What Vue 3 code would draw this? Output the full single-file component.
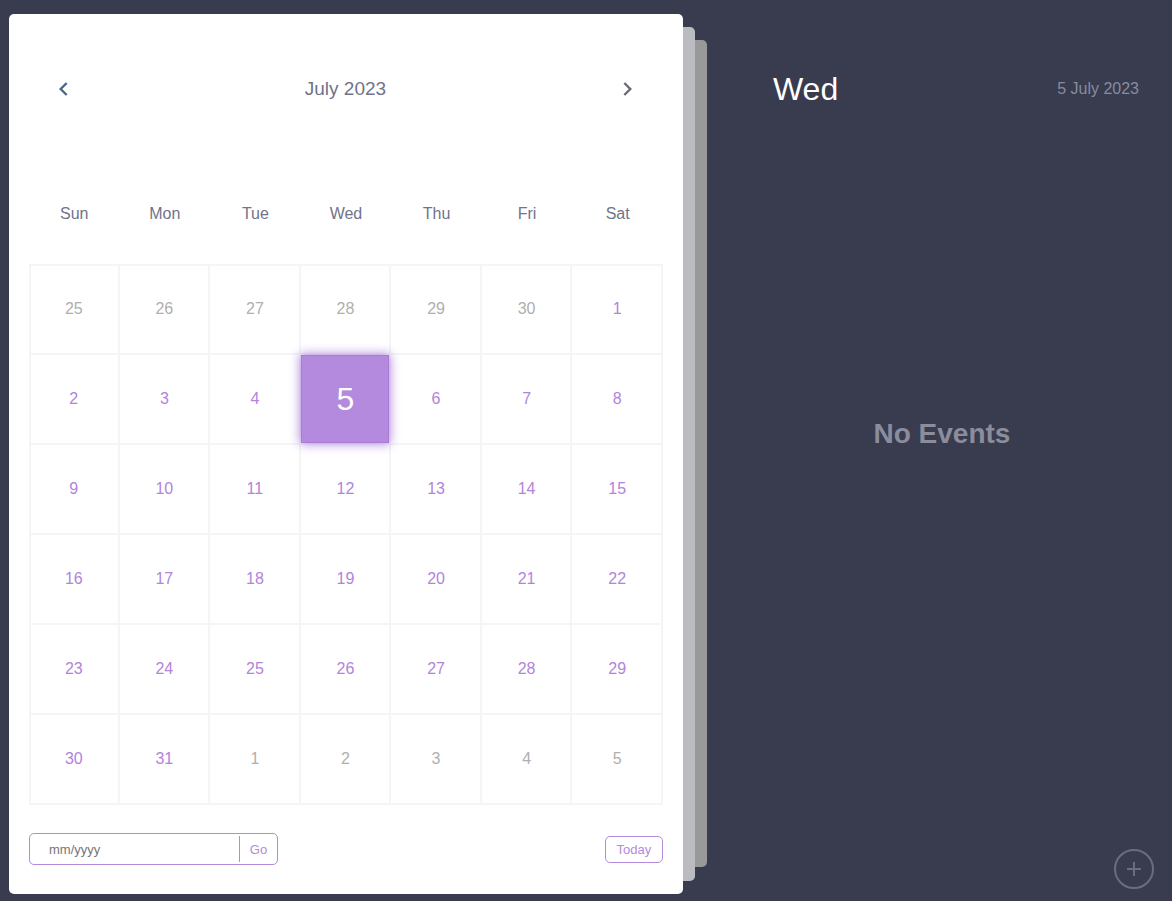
<script setup>
import { ref } from 'vue'

const weekdays = ['Sun', 'Mon', 'Tue', 'Wed', 'Thu', 'Fri', 'Sat']
const selected = ref('5-current')
const monthInput = ref('')

const range = (from, to, month) =>
  Array.from({ length: to - from + 1 }, (_, i) => ({
    day: from + i,
    month,
    key: `${from + i}-${month}`,
  }))

const days = [
  ...range(25, 30, 'previous'),
  ...range(1, 31, 'current'),
  ...range(1, 5, 'next'),
]
</script>

<template>
  <main class="page">
    <section class="calendar" aria-label="Calendar">
      <header class="month">
        <button class="arrow prev" type="button" aria-label="Previous month">
          <svg width="9" height="16" viewBox="0 0 9 16"><path d="M7.7 2l-6 6 6 6" /></svg>
        </button>
        <h1>July 2023</h1>
        <button class="arrow" type="button" aria-label="Next month">
          <svg width="9" height="16" viewBox="0 0 9 16"><path d="M1.3 2l6 6-6 6" /></svg>
        </button>
      </header>

      <div class="weekdays">
        <span v-for="name in weekdays" :key="name">{{ name }}</span>
      </div>

      <div class="days">
        <div v-for="d in days" :key="d.key" class="cell">
          <button
            type="button"
            class="day"
            :class="{ muted: d.month !== 'current', active: d.key === selected }"
            @click="selected = d.key"
          >{{ d.day }}</button>
        </div>
      </div>

      <footer class="tools">
        <form class="goto" @submit.prevent>
          <input v-model="monthInput" type="text" placeholder="mm/yyyy" aria-label="Month and year" />
          <button type="submit">Go</button>
        </form>
        <button class="today" type="button">Today</button>
      </footer>
    </section>

    <div class="sheet near"></div>
    <div class="sheet far"></div>

    <section class="events" aria-label="Events">
      <header class="date">
        <h2>Wed</h2>
        <p>5 July 2023</p>
      </header>
      <h3>No Events</h3>
      <button class="add" type="button" aria-label="Add event">
        <svg width="14" height="14" viewBox="0 0 14 14"><path d="M7 0v14M0 7h14" /></svg>
      </button>
    </section>
  </main>
</template>

<style>
body {
  background: #383c4e;
}
</style>

<style scoped>
* {
  box-sizing: border-box;
  margin: 0;
}

.page {
  display: flex;
  min-height: 100vh;
  padding: 14px 0 7px 9px;
  background: #383c4e;
  font-family: "Liberation Sans", Arial, sans-serif;
  font-size: 16px;
  color: #70738a;
}

button,
input {
  font-family: inherit;
  color: inherit;
  background: none;
  border: 0;
  padding: 0;
}

button {
  cursor: pointer;
}

.calendar {
  flex: 0 0 57.95%;
  display: flex;
  flex-direction: column;
  padding: 0 20px;
  background: #fff;
  border-radius: 5px;
}

.month {
  display: flex;
  align-items: center;
  justify-content: space-between;
  height: 150px;
  padding: 0 31px 0 30px;
}

.month h1 {
  font-size: 19px;
  font-weight: 400;
}

.arrow {
  display: flex;
}

.arrow svg {
  fill: none;
  stroke: #70687a;
  stroke-width: 2.4;
}

.arrow.prev svg {
  stroke: #46678a;
}

.weekdays {
  display: grid;
  grid-template-columns: repeat(7, 1fr);
  align-items: center;
  height: 100px;
  text-align: center;
}

.days {
  display: grid;
  grid-template-columns: repeat(7, 1fr);
  grid-auto-rows: minmax(90px, 1fr);
  border-top: 1px solid #f5f5f5;
  box-shadow: inset 2px 1px #f5f5f5;
}

.cell {
  display: flex;
  border: solid #f5f5f5;
  border-width: 0 2px 2px 0;
}

.day {
  flex: 1;
  padding-left: 1px;
  font-size: 16px;
  color: #b184db;
}

.day.muted {
  color: #afafaf;
}

.day.active {
  position: relative;
  border: 1px solid #a97bd6;
  background: #b38add;
  box-shadow: 0 0 10px 1px #b38add;
  font-size: 32px;
  color: #fff;
}

.tools {
  display: flex;
  align-items: center;
  justify-content: space-between;
  flex: 1;
  min-height: 89px;
  padding-bottom: 1px;
  font-size: 13px;
  color: #b38add;
}

.goto {
  display: flex;
  align-items: center;
  width: 249px;
  height: 32px;
  border: 1px solid #b38add;
  border-radius: 5px;
}

.goto input {
  flex: 1;
  min-width: 0;
  height: 30px;
  padding: 0 19px;
  outline: none;
  font-size: 13px;
  color: #666;
}

.goto input::placeholder {
  color: #757575;
  opacity: 1;
}

.goto button {
  width: 38px;
  height: 26px;
  border-left: 1px solid #b38add;
  font-size: 13px;
}

.today {
  min-width: 58px;
  height: 27px;
  padding: 0 10px;
  border: 1px solid #b38add;
  border-radius: 5px;
  font-size: 13px;
}

.sheet {
  flex: 0 0 12px;
  border-radius: 0 5px 5px 0;
}

.near {
  margin: 13px 0;
  background: #bbbcc0;
}

.far {
  margin: 26px 0 27px;
  background: #999;
}

.events {
  flex: 1;
  display: flex;
  flex-direction: column;
  align-items: center;
  padding-left: 5px;
}

.date {
  align-self: stretch;
  display: flex;
  align-items: center;
  justify-content: space-between;
  height: 150px;
  padding: 0 33px 0 61px;
}

.date h2 {
  font-size: 32px;
  font-weight: 400;
  color: #fff;
}

.date p {
  color: #878ba0;
}

.events h3 {
  margin-top: 254px;
  font-size: 28px;
  line-height: 32px;
  color: #8b8c9c;
}

.add {
  display: flex;
  align-items: center;
  justify-content: center;
  align-self: flex-end;
  width: 40px;
  height: 40px;
  margin: auto 18px 5px 0;
  border: 2px solid #6b6d7d;
  border-radius: 50%;
}

.add svg {
  fill: none;
  stroke: #6b6d7d;
  stroke-width: 2;
}
</style>
